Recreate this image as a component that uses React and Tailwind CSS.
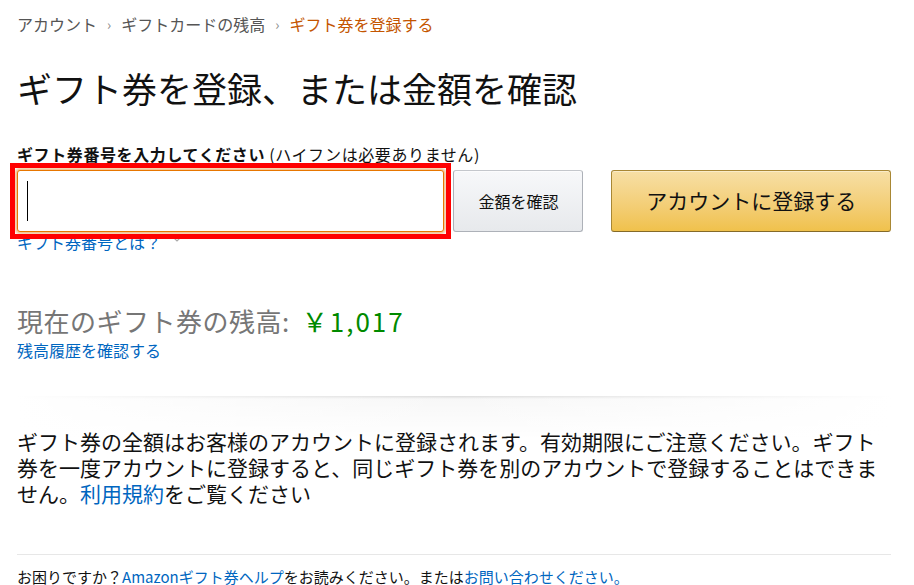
import React from 'react';

const font = "font-['Noto_Sans_CJK_JP','Noto_Sans',sans-serif]";

export default function App() {
  return (
    <div className={`${font} min-h-[585px] bg-white pl-[17px] pr-[23px] pt-[14px] text-[#111]`}>
      <nav className="flex items-center text-[16px] leading-[20px] text-[#555]">
        <a href="#">アカウント</a>
        <span className="px-[10px] text-[14px] text-[#888]">›</span>
        <a href="#">ギフトカードの残高</a>
        <span className="px-[10px] text-[14px] text-[#888]">›</span>
        <span className="text-[#c45500]">ギフト券を登録する</span>
      </nav>

      <h1 className="mt-[32px] text-[35px] font-normal leading-[44px]">
        ギフト券を登録、または金額を確認
      </h1>

      <label className="mt-[34px] block text-[16px] leading-[20px] tracking-[0.6px]">
        <span className="font-bold">ギフト券番号を入力してください</span>
        <span> (ハイフンは必要ありません)</span>
      </label>

      <div className="mt-[6px] flex items-stretch">
        <div className="relative w-[428px]">
          <div className="flex h-[62px] items-center rounded-[3px] border border-[#e77600] bg-white pl-[9px] shadow-[0_0_3px_2px_rgba(228,121,17,0.5)]">
            <span className="h-[40px] w-px bg-black" />
          </div>
          <div className="absolute -inset-[7px] z-10 border-[5px] border-[#ff0000]" />
        </div>

        <button className="ml-[9px] w-[130px] rounded-[3px] border border-[#adb1b8] border-t-[#c4c7cc] bg-gradient-to-b from-[#f7f8fa] to-[#e7e9ec] text-[16px] text-[#111] shadow-[0_1px_0_rgba(255,255,255,0.6)_inset]">
          金額を確認
        </button>

        <button className="ml-[28px] w-[280px] rounded-[3px] border border-[#a88734] border-b-[#846a29] bg-gradient-to-b from-[#f7dfa5] to-[#f0c14b] text-[21px] text-[#111] shadow-[0_1px_0_rgba(255,255,255,0.4)_inset]">
          アカウントに登録する
        </button>
      </div>

      <div className="mt-0 flex items-center text-[16px] leading-[20px]">
        <a href="#" className="text-[#0066c0]">ギフト券番号とは？</a>
        <svg width="8" height="6" viewBox="0 0 8 6" className="ml-[12px] mt-[-4px]">
          <path d="M1 1l3 3 3-3" fill="none" stroke="#aaa" strokeWidth="1.2" />
        </svg>
      </div>

      <div className="mt-[53px] flex items-baseline text-[26px] leading-[32px]">
        <span className="text-[#767676] tracking-[0.5px]">現在のギフト券の残高: </span>
        <span className="ml-[12px] tracking-[2px] text-[#008a00]">￥1,017</span>
      </div>
      <a href="#" className="mt-[3px] block text-[16px] leading-[20px] text-[#0066c0]">
        残高履歴を確認する
      </a>

      <div className="mt-[36px] mb-[-18px] h-[44px] bg-[linear-gradient(to_bottom,rgba(0,0,0,0.14),rgba(0,0,0,0.03)_3px,transparent)]">
        <div className="h-full bg-[linear-gradient(to_right,#fff,rgba(255,255,255,0),#fff)]" />
      </div>

      <p className="relative mt-[6px] text-[21px] leading-[26px]">
        ギフト券の全額はお客様のアカウントに登録されます。有効期限にご注意ください。ギフト券を一度アカウントに登録すると、同じギフト券を別のアカウントで登録することはできません。
        <a href="#" className="text-[#0066c0]">利用規約</a>
        をご覧ください
      </p>

      <div className="mt-[48px] border-t border-[#e7e7e7]" />

      <p className="mt-[12px] text-[15px] leading-[20px]">
        お困りですか？<a href="#" className="text-[#0066c0]">Amazonギフト券ヘルプ</a>をお読みください。または
        <a href="#" className="text-[#0066c0]">お問い合わせください。</a>
      </p>
    </div>
  );
}
